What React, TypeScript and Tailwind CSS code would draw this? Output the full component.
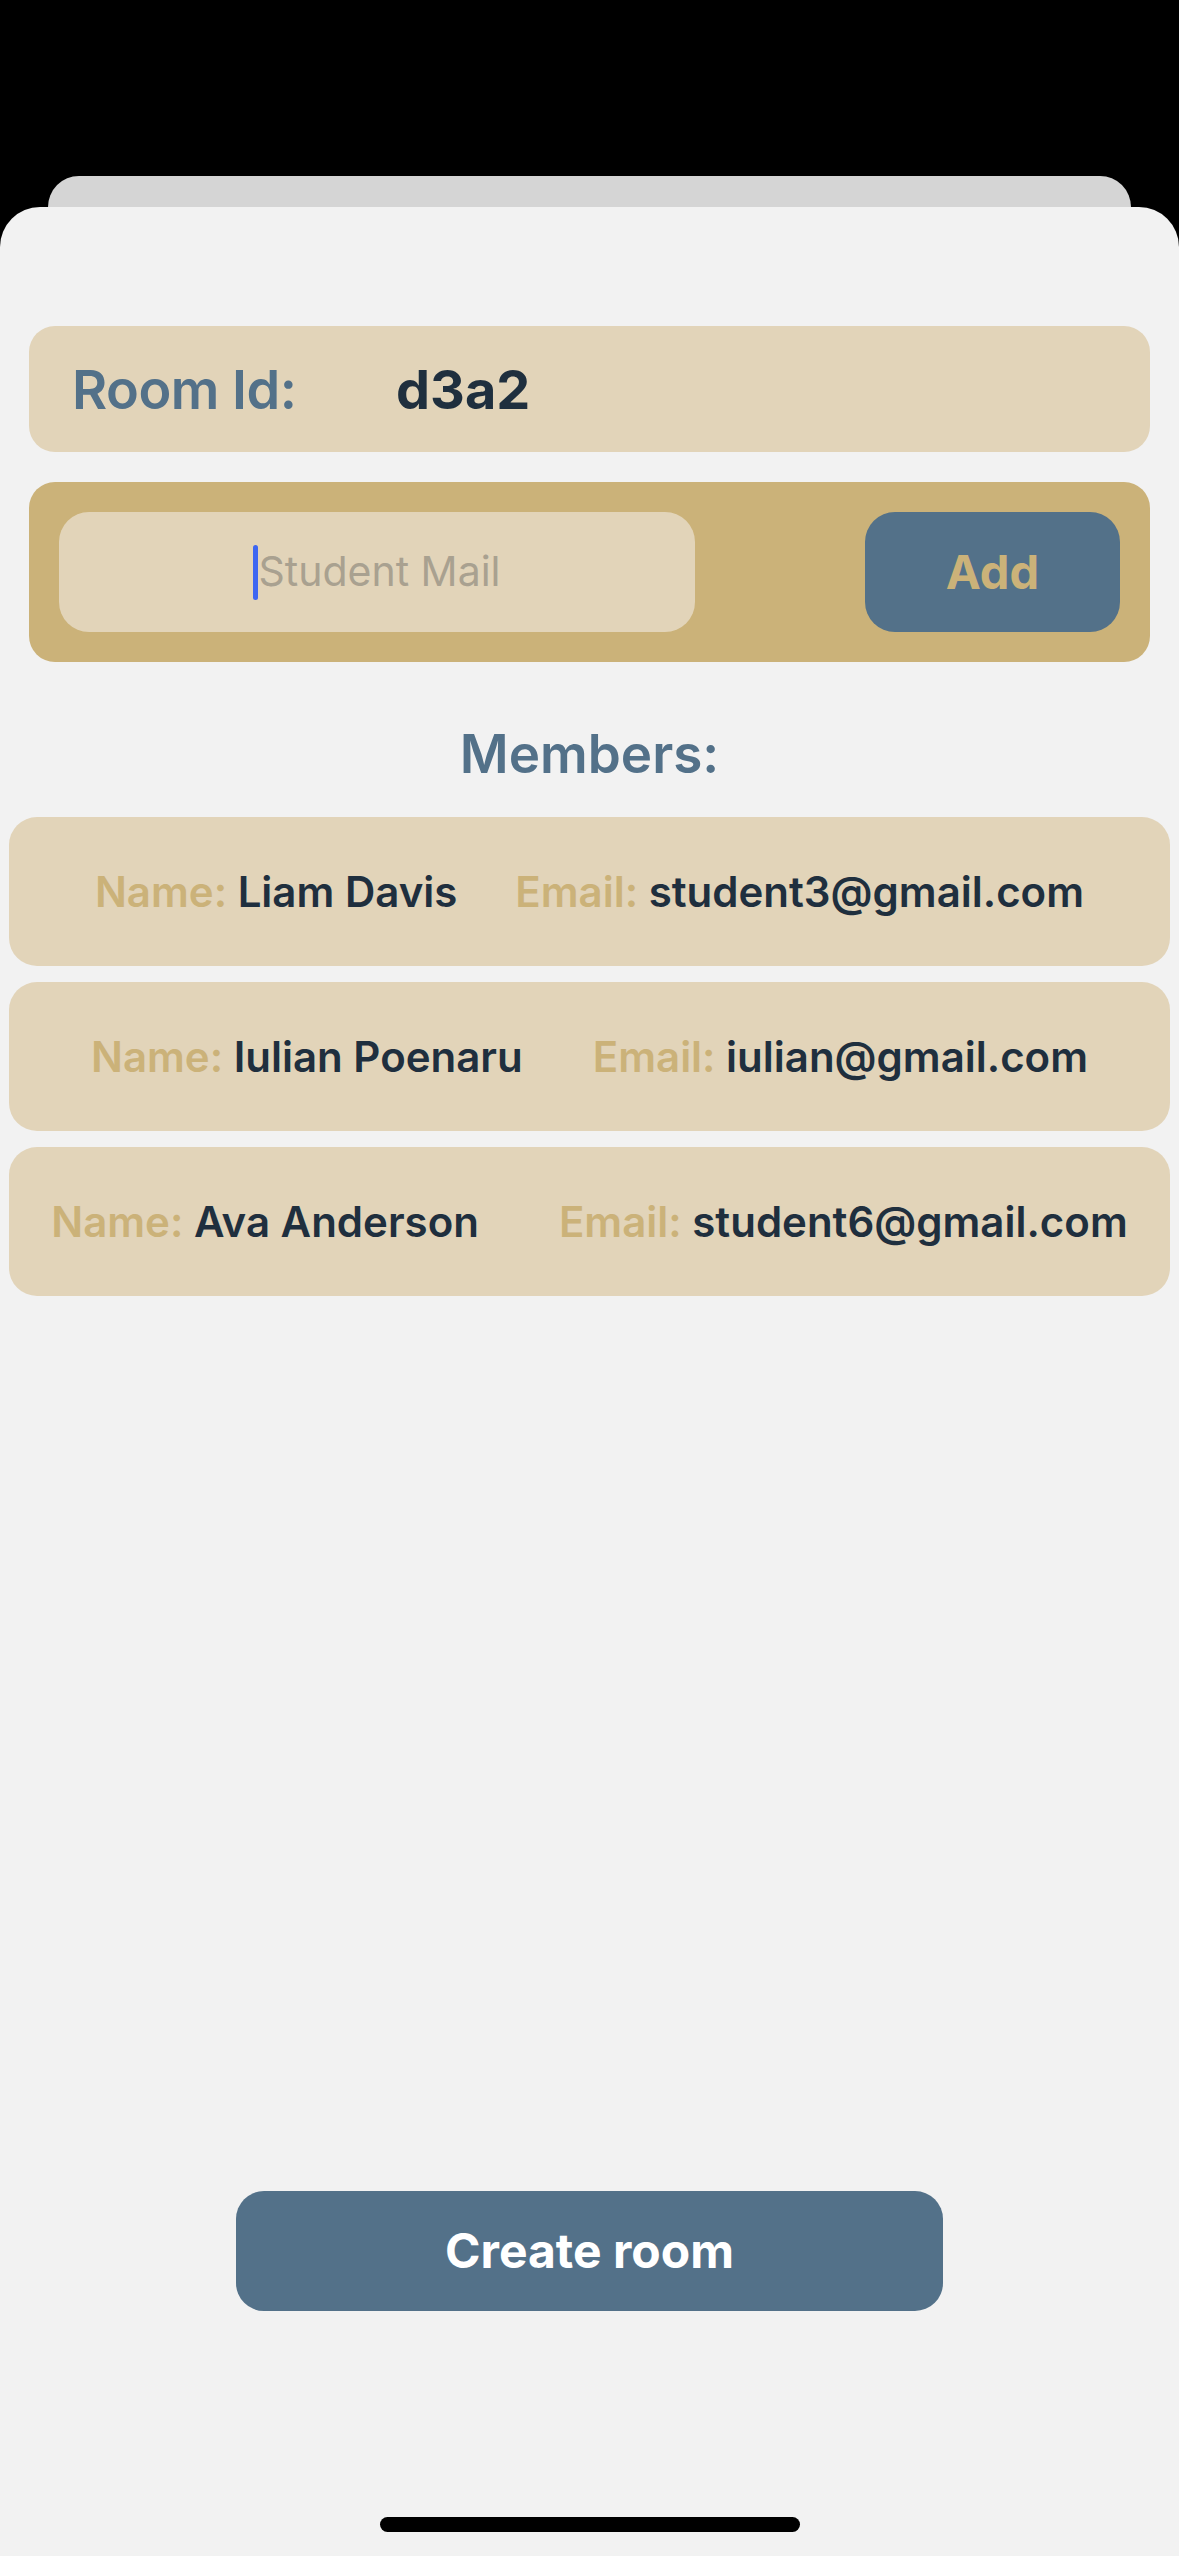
import React from 'react';

const members = [
  { name: 'Liam Davis', email: 'student3@gmail.com', gap: 'gap-[58px]' },
  { name: 'Iulian Poenaru', email: 'iulian@gmail.com', gap: 'gap-[70px]' },
  { name: 'Ava Anderson', email: 'student6@gmail.com', gap: 'gap-[80px]' },
];

function MemberCard({ name, email, gap }: { name: string; email: string; gap: string }) {
  return (
    <div className={`mx-[9px] h-[149px] rounded-[28px] bg-[#e2d4b9] flex items-center justify-center ${gap} text-[42px] font-semibold leading-none`}>
      <div>
        <span className="text-[#cbb279]">Name: </span>
        <span className="text-[#1f2f3e]">{name}</span>
      </div>
      <div>
        <span className="text-[#cbb279]">Email: </span>
        <span className="text-[#1f2f3e]">{email}</span>
      </div>
    </div>
  );
}

export default function App() {
  return (
    <div
      className="w-[1179px] h-[2556px] bg-black overflow-hidden flex flex-col"
      style={{ fontFamily: 'Inter, "Noto Sans", sans-serif' }}
    >
      {/* stacked sheet behind */}
      <div className="mt-[176px] mx-[48px] h-[31px] rounded-t-[36px] bg-[#d5d5d5]" />

      <div className="flex-1 bg-[#f2f2f2] rounded-t-[40px] flex flex-col">
        {/* room id */}
        <div className="mt-[119px] mx-[29px] h-[126px] rounded-[26px] bg-[#e2d4b9] flex items-center pl-[43px]">
          <span className="w-[324px] text-[54px] font-semibold text-[#537189] tracking-[-0.5px]">Room Id:</span>
          <span className="text-[54px] font-bold text-[#1f2f3e]">d3a2</span>
        </div>

        {/* add student */}
        <div className="mt-[30px] mx-[29px] h-[180px] rounded-[26px] bg-[#cbb279] flex items-center justify-between px-[30px]">
          <div className="w-[636px] h-[120px] rounded-[30px] bg-[#e2d4b9] flex items-center justify-center">
            <span className="w-[5px] h-[55px] rounded-full bg-[#3d66f2]" />
            <span className="text-[41px] text-[#a9a190]">Student Mail</span>
          </div>
          <button className="w-[255px] h-[120px] rounded-[30px] bg-[#537189] text-[47px] font-bold text-[#cbb279]">
            Add
          </button>
        </div>

        <div className="mt-[61px] h-[62px] text-center text-[53px] leading-[62px] font-semibold text-[#537189]">
          Members:
        </div>

        <div className="mt-[32px] flex flex-col gap-[16px]">
          {members.map((m) => (
            <MemberCard key={m.email} name={m.name} email={m.email} gap={m.gap} />
          ))}
        </div>

        <button className="mt-[895px] ml-[236px] w-[707px] h-[120px] rounded-[28px] bg-[#537189] text-[48px] font-bold text-white">
          Create room
        </button>

        <div className="mt-[206px] mx-auto w-[420px] h-[15px] rounded-full bg-black" />
      </div>
    </div>
  );
}
